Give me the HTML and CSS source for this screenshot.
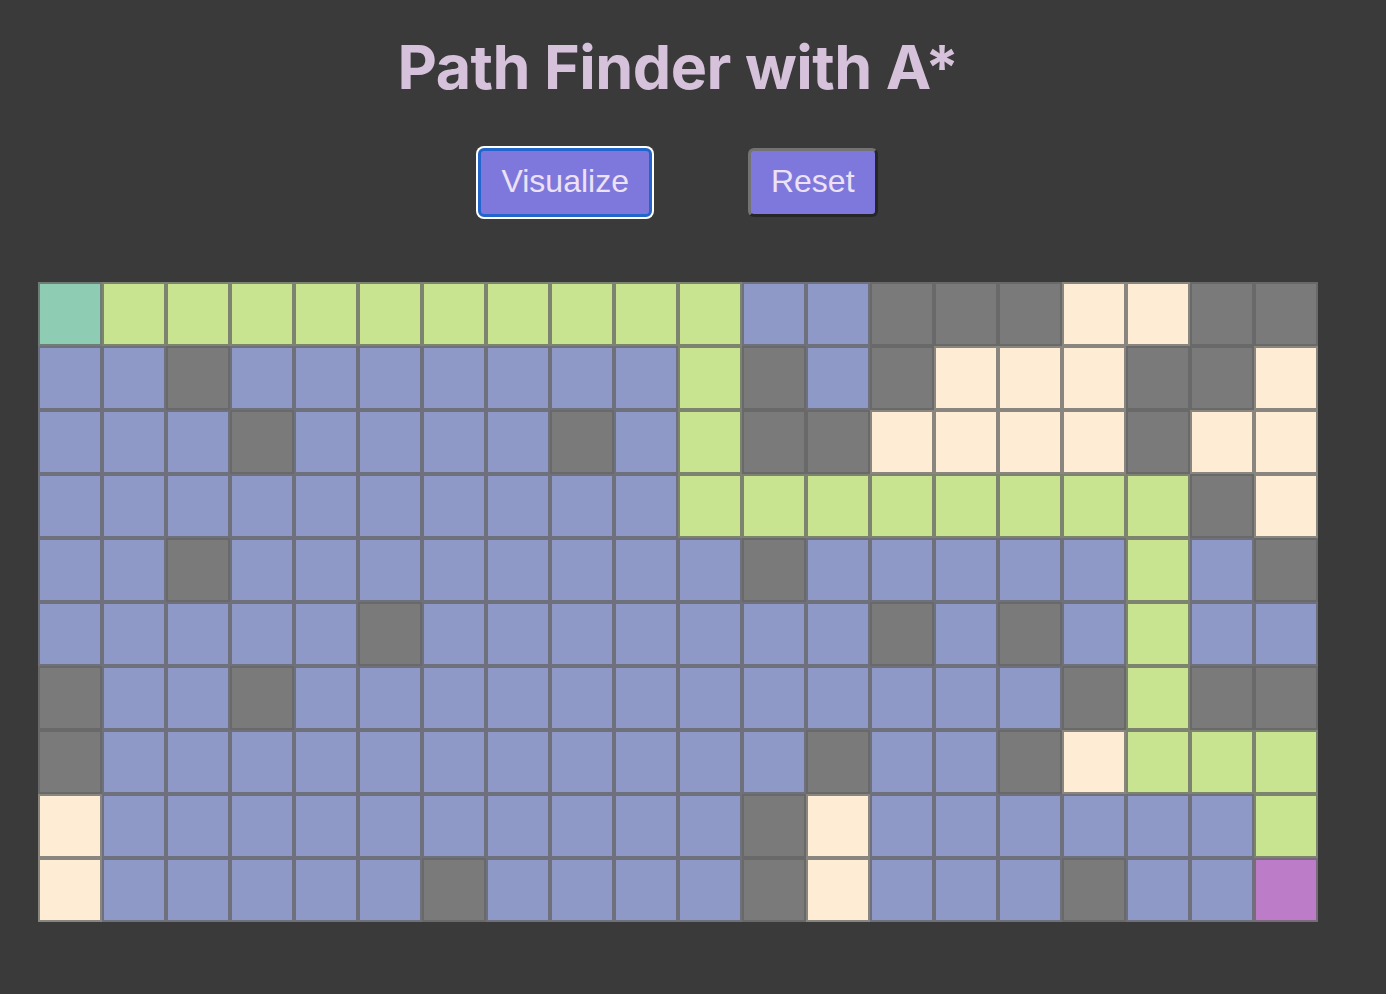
FILE: index.html
```html
<!DOCTYPE html>
<html>
<head>
<meta charset="utf-8">
<title>Path Finder with A*</title>
<link rel="stylesheet" href="styles.css">
</head>
<body>
<div class="page">
  <h1 class="title">Path Finder with A*</h1>
  <div class="controls">
    <button class="btn btn-focus">Visualize</button>
    <button class="btn">Reset</button>
  </div>
  <div class="grid">
    <div class="c s"></div><div class="c g"></div><div class="c g"></div><div class="c g"></div><div class="c g"></div><div class="c g"></div><div class="c g"></div><div class="c g"></div><div class="c g"></div><div class="c g"></div><div class="c g"></div><div class="c b"></div><div class="c b"></div><div class="c w"></div><div class="c w"></div><div class="c w"></div><div class="c o"></div><div class="c o"></div><div class="c w"></div><div class="c w"></div>
    <div class="c b"></div><div class="c b"></div><div class="c w"></div><div class="c b"></div><div class="c b"></div><div class="c b"></div><div class="c b"></div><div class="c b"></div><div class="c b"></div><div class="c b"></div><div class="c g"></div><div class="c w"></div><div class="c b"></div><div class="c w"></div><div class="c o"></div><div class="c o"></div><div class="c o"></div><div class="c w"></div><div class="c w"></div><div class="c o"></div>
    <div class="c b"></div><div class="c b"></div><div class="c b"></div><div class="c w"></div><div class="c b"></div><div class="c b"></div><div class="c b"></div><div class="c b"></div><div class="c w"></div><div class="c b"></div><div class="c g"></div><div class="c w"></div><div class="c w"></div><div class="c o"></div><div class="c o"></div><div class="c o"></div><div class="c o"></div><div class="c w"></div><div class="c o"></div><div class="c o"></div>
    <div class="c b"></div><div class="c b"></div><div class="c b"></div><div class="c b"></div><div class="c b"></div><div class="c b"></div><div class="c b"></div><div class="c b"></div><div class="c b"></div><div class="c b"></div><div class="c g"></div><div class="c g"></div><div class="c g"></div><div class="c g"></div><div class="c g"></div><div class="c g"></div><div class="c g"></div><div class="c g"></div><div class="c w"></div><div class="c o"></div>
    <div class="c b"></div><div class="c b"></div><div class="c w"></div><div class="c b"></div><div class="c b"></div><div class="c b"></div><div class="c b"></div><div class="c b"></div><div class="c b"></div><div class="c b"></div><div class="c b"></div><div class="c w"></div><div class="c b"></div><div class="c b"></div><div class="c b"></div><div class="c b"></div><div class="c b"></div><div class="c g"></div><div class="c b"></div><div class="c w"></div>
    <div class="c b"></div><div class="c b"></div><div class="c b"></div><div class="c b"></div><div class="c b"></div><div class="c w"></div><div class="c b"></div><div class="c b"></div><div class="c b"></div><div class="c b"></div><div class="c b"></div><div class="c b"></div><div class="c b"></div><div class="c w"></div><div class="c b"></div><div class="c w"></div><div class="c b"></div><div class="c g"></div><div class="c b"></div><div class="c b"></div>
    <div class="c w"></div><div class="c b"></div><div class="c b"></div><div class="c w"></div><div class="c b"></div><div class="c b"></div><div class="c b"></div><div class="c b"></div><div class="c b"></div><div class="c b"></div><div class="c b"></div><div class="c b"></div><div class="c b"></div><div class="c b"></div><div class="c b"></div><div class="c b"></div><div class="c w"></div><div class="c g"></div><div class="c w"></div><div class="c w"></div>
    <div class="c w"></div><div class="c b"></div><div class="c b"></div><div class="c b"></div><div class="c b"></div><div class="c b"></div><div class="c b"></div><div class="c b"></div><div class="c b"></div><div class="c b"></div><div class="c b"></div><div class="c b"></div><div class="c w"></div><div class="c b"></div><div class="c b"></div><div class="c w"></div><div class="c o"></div><div class="c g"></div><div class="c g"></div><div class="c g"></div>
    <div class="c o"></div><div class="c b"></div><div class="c b"></div><div class="c b"></div><div class="c b"></div><div class="c b"></div><div class="c b"></div><div class="c b"></div><div class="c b"></div><div class="c b"></div><div class="c b"></div><div class="c w"></div><div class="c o"></div><div class="c b"></div><div class="c b"></div><div class="c b"></div><div class="c b"></div><div class="c b"></div><div class="c b"></div><div class="c g"></div>
    <div class="c o"></div><div class="c b"></div><div class="c b"></div><div class="c b"></div><div class="c b"></div><div class="c b"></div><div class="c w"></div><div class="c b"></div><div class="c b"></div><div class="c b"></div><div class="c b"></div><div class="c w"></div><div class="c o"></div><div class="c b"></div><div class="c b"></div><div class="c b"></div><div class="c w"></div><div class="c b"></div><div class="c b"></div><div class="c e"></div>
  </div>
</div>
</body>
</html>
```

FILE: styles.css
```css
html, body {
  margin: 0;
  padding: 0;
  background: #3a3a3a;
  height: 100%;
}

.page {
  width: 1356px;
  display: flex;
  flex-direction: column;
  align-items: center;
}

.title {
  margin: 30px 0 0 0;
  font-family: Inter, "Liberation Sans", sans-serif;
  font-weight: 700;
  font-size: 61px;
  line-height: 75px;
  color: #d6c2da;
  letter-spacing: -0.5px;
}

.controls {
  margin-top: 43px;
  display: flex;
  gap: 96px;
}

.btn {
  box-sizing: border-box;
  height: 69px;
  padding: 0 20px 2px 20px;
  font-family: "Liberation Sans", Arial, sans-serif;
  font-size: 32px;
  color: #ece2f4;
  background: #7f78dc;
  border: 3px solid;
  border-color: #737373 #262626 #262626 #737373;
  border-radius: 6px;
}

.btn-focus {
  border-color: #2266cc;
  box-shadow: 0 0 0 2px #ffffff;
}

.grid {
  margin-top: 65px;
  display: grid;
  grid-template-columns: repeat(20, 64px);
  grid-auto-rows: 64px;
}

.c {
  box-sizing: border-box;
  border: 2px solid rgba(100, 100, 100, 0.76);
}

.s { background: #8ecdb4; }
.g { background: #c9e490; }
.b { background: #8e99c8; }
.w { background: #7a7a7a; }
.o { background: #feecd4; }
.e { background: #bc7cc8; }
```
